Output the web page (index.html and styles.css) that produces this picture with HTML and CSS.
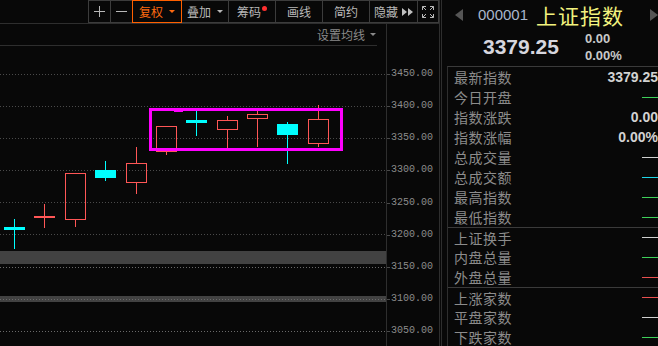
FILE: index.html
```html
<!DOCTYPE html>
<html lang="zh-CN">
<head>
<meta charset="utf-8">
<title>上证指数</title>
<link rel="stylesheet" href="styles.css">
</head>
<body>
<div class="app">
  <div class="main">
    <div class="toolbar">
      <div class="btns">
        <div class="btn sq"><svg width="11" height="11" viewBox="0 0 11 11"><path d="M5.5 0V11M0 5.5H11" stroke="#b8b8b8" stroke-width="1"/></svg></div>
        <div class="btn sq"><svg width="11" height="11" viewBox="0 0 11 11"><path d="M0 5.5H11" stroke="#b8b8b8" stroke-width="1"/></svg></div>
        <div class="btn w49 active">复权<span class="caret"></span></div>
        <div class="btn w47">叠加<span class="caret"></span></div>
        <div class="btn w47">筹码<span class="dot"></span></div>
        <div class="btn w47">画线</div>
        <div class="btn w47">简约</div>
        <div class="btn w48">隐藏<svg class="ff" width="11" height="8" viewBox="0 0 11 8"><path d="M0 0L5 4L0 8Z M6 0L11 4L6 8Z" fill="#c0c0c0"/></svg></div>
        <div class="btn sq last"><svg width="12" height="12" viewBox="0 0 12 12" fill="none" stroke="#b8b8b8" stroke-width="1"><path d="M0.5 4V0.5H4M0.5 0.5L4 4M8 0.5H11.5V4M11.5 0.5L8 4M0.5 8V11.5H4M0.5 11.5L4 8M8 11.5H11.5V8M11.5 11.5L8 8"/></svg></div>
      </div>
    </div>
    <div class="chart">
      <div class="plot">
        <div class="ma-bar">设置均线<span class="caret gray"></span></div>
        <svg class="kline" width="386" height="299" viewBox="0 47 386 299">
          <g stroke="#4a4a4a" stroke-dasharray="1 2">
            <line x1="0" y1="75.5" x2="386" y2="75.5"/>
            <line x1="0" y1="107.5" x2="386" y2="107.5"/>
            <line x1="0" y1="139.5" x2="386" y2="139.5"/>
            <line x1="0" y1="171.5" x2="386" y2="171.5"/>
            <line x1="0" y1="203.5" x2="386" y2="203.5"/>
            <line x1="0" y1="235.5" x2="386" y2="235.5"/>
          </g>
          <rect x="0" y="252" width="386" height="13" fill="#424242"/>
          <rect x="0" y="297" width="386" height="6" fill="#424242"/>
          <g stroke="#6a6a6a" stroke-dasharray="1 2">
            <line x1="0" y1="268.5" x2="386" y2="268.5"/>
            <line x1="0" y1="300.5" x2="386" y2="300.5"/>
            <line x1="0" y1="332.5" x2="386" y2="332.5"/>
          </g>
          <g stroke="#00ffff" stroke-width="1">
            <line x1="14.5" y1="220" x2="14.5" y2="250"/>
            <line x1="105.5" y1="162" x2="105.5" y2="182"/>
            <line x1="196.5" y1="112" x2="196.5" y2="137"/>
            <line x1="287.5" y1="123" x2="287.5" y2="165"/>
          </g>
          <g fill="#00ffff">
            <rect x="4" y="228" width="21" height="3"/>
            <rect x="95" y="171" width="21" height="8"/>
            <rect x="186" y="121" width="21" height="3"/>
            <rect x="277" y="125" width="21" height="11"/>
          </g>
          <g stroke="#ff5656" stroke-width="1" fill="none">
            <line x1="44.5" y1="205" x2="44.5" y2="229"/>
            <line x1="75.5" y1="221" x2="75.5" y2="228"/>
            <line x1="136.5" y1="148" x2="136.5" y2="164"/>
            <line x1="136.5" y1="184" x2="136.5" y2="195"/>
            <line x1="166.5" y1="152" x2="166.5" y2="156"/>
            <line x1="227.5" y1="117" x2="227.5" y2="121"/>
            <line x1="227.5" y1="131" x2="227.5" y2="149"/>
            <line x1="257.5" y1="112" x2="257.5" y2="115"/>
            <line x1="257.5" y1="120" x2="257.5" y2="148"/>
            <line x1="318.5" y1="106" x2="318.5" y2="120"/>
            <line x1="318.5" y1="145" x2="318.5" y2="148"/>
            <rect x="65.5" y="174.5" width="20" height="46"/>
            <rect x="126.5" y="164.5" width="20" height="19"/>
            <rect x="156.5" y="127.5" width="20" height="25"/>
            <rect x="217.5" y="121.5" width="20" height="9"/>
            <rect x="247.5" y="115.5" width="20" height="4"/>
            <rect x="308.5" y="120.5" width="20" height="24"/>
          </g>
          <rect x="34" y="217" width="21" height="2" fill="#ff5656"/>
          <rect x="150.5" y="110.5" width="191" height="40" fill="none" stroke="#ff00ff" stroke-width="3"/>
          <rect x="174" y="111" width="9" height="2" fill="#ff00ff"/>
        </svg>
      </div>
      <div class="axis">
        <div class="tick">3450.00</div>
        <div class="tick">3400.00</div>
        <div class="tick">3350.00</div>
        <div class="tick">3300.00</div>
        <div class="tick">3250.00</div>
        <div class="tick">3200.00</div>
        <div class="tick">3150.00</div>
        <div class="tick">3100.00</div>
        <div class="tick">3050.00</div>
      </div>
    </div>
  </div>
  <div class="divider"></div>
  <div class="panel">
    <div class="head">
      <div class="title">
        <span class="arrow left"></span>
        <span class="code">000001</span>
        <span class="name">上证指数</span>
        <span class="arrow right"></span>
      </div>
      <div class="quote">
        <span class="price">3379.25</span>
        <div class="chg">
          <span>0.00</span>
          <span>0.00%</span>
        </div>
      </div>
    </div>
    <div class="table">
      <div class="section">
        <div class="row"><span class="lbl">最新指数</span><span class="val">3379.25</span></div>
        <div class="row"><span class="lbl">今日开盘</span><span class="dash green"></span></div>
        <div class="row"><span class="lbl">指数涨跌</span><span class="val">0.00</span></div>
        <div class="row"><span class="lbl">指数涨幅</span><span class="val">0.00%</span></div>
        <div class="row"><span class="lbl">总成交量</span><span class="dash white"></span></div>
        <div class="row"><span class="lbl">总成交额</span><span class="dash cyan"></span></div>
        <div class="row"><span class="lbl">最高指数</span><span class="dash green"></span></div>
        <div class="row"><span class="lbl">最低指数</span><span class="dash green"></span></div>
      </div>
      <div class="section">
        <div class="row"><span class="lbl">上证换手</span><span class="dash white"></span></div>
        <div class="row"><span class="lbl">内盘总量</span><span class="dash green"></span></div>
        <div class="row"><span class="lbl">外盘总量</span><span class="dash red"></span></div>
      </div>
      <div class="section">
        <div class="row"><span class="lbl">上涨家数</span><span class="dash red"></span></div>
        <div class="row"><span class="lbl">平盘家数</span><span class="dash white"></span></div>
        <div class="row"><span class="lbl">下跌家数</span><span class="dash green"></span></div>
      </div>
    </div>
  </div>
</div>
</body>
</html>
```

FILE: styles.css
```css
* { box-sizing: border-box; }
html, body {
  margin: 0;
  padding: 0;
  background: #080808;
  width: 658px;
  height: 346px;
  overflow: hidden;
  font-family: "Noto Sans CJK SC", "Liberation Sans", sans-serif;
}
.app {
  display: flex;
  width: 658px;
  height: 346px;
}
.main {
  width: 439px;
  display: flex;
  flex-direction: column;
}
.toolbar {
  height: 25px;
  border-bottom: 1px solid #2e2e2e;
  display: flex;
  justify-content: flex-end;
}
.btns {
  display: flex;
  height: 23px;
  padding-left: 1px;
}
.btn {
  height: 23px;
  border: 1px solid #3c3c3c;
  margin-left: -1px;
  display: flex;
  align-items: center;
  justify-content: center;
  color: #b8b8b8;
  font-size: 12px;
  line-height: 1;
  gap: 6px;
  position: relative;
}
.btn.sq { width: 23px; }
.btn.last { width: 22px; }
.btn.w49 { width: 50px; }
.btn.w47 { width: 48px; }
.btn.w48 { width: 49px; }
.btn.active {
  border-color: #ff6000;
  color: #ff6a10;
  z-index: 1;
}
.caret {
  width: 0;
  height: 0;
  border-left: 3px solid transparent;
  border-right: 3px solid transparent;
  border-top: 3px solid #b8b8b8;
}
.btn.active .caret { border-top-color: #ff6a10; }
.caret.gray { border-top-color: #8a8a8a; margin-left: 5px; }
.dot {
  width: 5px;
  height: 5px;
  border-radius: 50%;
  background: #ff3030;
  align-self: flex-start;
  margin-top: 5px;
  margin-left: -5px;
}
.ff { margin-left: -2px; }
.chart {
  flex: 1;
  display: flex;
}
.plot {
  width: 386px;
  display: flex;
  flex-direction: column;
}
.ma-bar {
  height: 22px;
  width: 377px;
  border-bottom: 1px solid #2e2e2e;
  display: flex;
  align-items: center;
  justify-content: flex-end;
  padding-right: 1px;
  font-size: 12px;
  color: #8a8a8a;
}
.kline { display: block; }
.axis {
  width: 53px;
  border-left: 1px solid #2e2e2e;
  padding-top: 33.9px;
  display: flex;
  flex-direction: column;
}
.tick {
  height: 32.2px;
  line-height: 32.2px;
  font-family: "Liberation Mono", monospace;
  font-size: 10px;
  color: #8c8c8c;
  padding-left: 4px;
  position: relative;
}
.tick::before {
  content: "";
  position: absolute;
  left: 0;
  top: 16px;
  width: 3px;
  border-top: 1px solid #4a4a4a;
}
.divider {
  width: 3px;
  border-left: 1px solid #2e2e2e;
  border-right: 1px solid #2e2e2e;
}
.panel {
  flex: 1;
  min-width: 0;
  display: flex;
  flex-direction: column;
}
.head {
  height: 70px;
}
.title {
  height: 28px;
  display: flex;
  align-items: center;
  padding-left: 13px;
  padding-top: 1px;
}
.arrow {
  width: 0;
  height: 0;
  flex-shrink: 0;
  border-top: 6px solid transparent;
  border-bottom: 6px solid transparent;
}
.arrow.left { border-right: 8px solid #555; }
.arrow.right { border-left: 8px solid #555; margin-left: auto; }
.code {
  margin-left: 15px;
  font-family: "Liberation Sans", sans-serif;
  font-size: 15px;
  line-height: 18px;
  color: #a9b6cc;
}
.name {
  margin-left: 8px;
  font-size: 21px;
  line-height: 26px;
  letter-spacing: 1px;
  color: #f2f27e;
  white-space: nowrap;
  flex-shrink: 0;
}
.quote {
  height: 38px;
  display: flex;
  align-items: center;
  padding-left: 41px;
}
.price {
  font-family: "Liberation Sans", sans-serif;
  font-weight: bold;
  font-size: 21px;
  color: #d6d6de;
}
.chg {
  margin-left: 26px;
  display: flex;
  flex-direction: column;
  font-family: "Liberation Sans", sans-serif;
  font-weight: bold;
  font-size: 13px;
  line-height: 17px;
  color: #c8c8c8;
}
.table {
  flex: 1;
  margin-left: 5px;
  border-left: 1px solid #2e2e2e;
  border-top: 1px solid #3a3a3a;
}
.section + .section { border-top: 1px solid #3a3a3a; }
.row {
  height: 20px;
  display: flex;
  align-items: center;
  justify-content: space-between;
  padding-left: 6px;
}
.section + .section .row:first-child { height: 19px; }
.lbl {
  font-size: 14px;
  letter-spacing: 0.5px;
  color: #8c8c8c;
}
.val {
  font-family: "Liberation Sans", sans-serif;
  font-weight: bold;
  font-size: 14px;
  color: #d2d2d2;
  white-space: nowrap;
}
.dash {
  width: 16px;
  height: 1px;
}
.dash.green { background: #3ed05a; }
.dash.white { background: #d0d0d0; }
.dash.cyan { background: #1ed6e6; }
.dash.red { background: #e85050; }
```
